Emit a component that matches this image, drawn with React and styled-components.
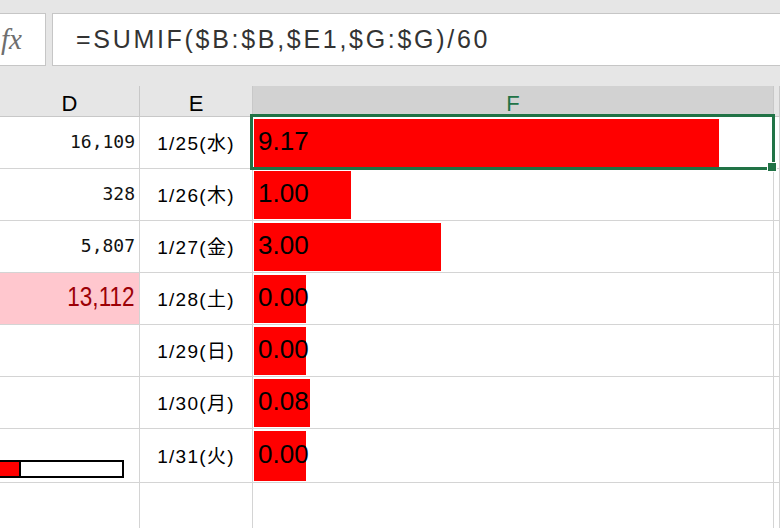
import React from "react";
import styled, { createGlobalStyle } from "styled-components";

const GlobalStyle = createGlobalStyle`
  body {
    margin: 0;
    background: #ffffff;
    overflow: hidden;
  }
`;

const Sheet = styled.div`
  width: 780px;
  height: 528px;
  overflow: hidden;
  display: flex;
  flex-direction: column;
  background: #ffffff;
`;

// 数式バー
const FormulaBar = styled.div`
  display: flex;
  gap: 6px;
  padding: 13px 0 20px;
  background: #e6e6e6;
`;

const FxBox = styled.div`
  box-sizing: border-box;
  margin-left: -20px;
  width: 66px;
  height: 53px;
  padding-right: 23px;
  display: flex;
  align-items: center;
  justify-content: flex-end;
  background: #ffffff;
  border: 1px solid #c6c6c6;
  font-family: "Liberation Serif", serif;
  font-style: italic;
  font-size: 29px;
  color: #6e6e6e;
`;

const FormulaInput = styled.div`
  box-sizing: border-box;
  flex: 1;
  margin-right: -20px;
  height: 53px;
  padding-left: 23px;
  display: flex;
  align-items: center;
  background: #ffffff;
  border: 1px solid #c6c6c6;
  font-family: "Liberation Sans", sans-serif;
  font-size: 25px;
  letter-spacing: 2.7px;
  color: #333333;
  white-space: nowrap;
`;

const Row = styled.div`
  display: grid;
  grid-template-columns: 140px 113px 521px 1fr;
  height: ${(p) => p.$h}px;
  flex-shrink: 0;
`;

const HeaderCell = styled.div`
  box-sizing: border-box;
  display: flex;
  align-items: flex-end;
  justify-content: center;
  padding-bottom: 1px;
  background: ${(p) => (p.$active ? "#d2d2d2" : "#e6e6e6")};
  border-right: 1px solid #c8c8c8;
  border-bottom: 1px solid #c8c8c8;
  font-family: "Liberation Sans", sans-serif;
  font-size: 22px;
  line-height: 22px;
  color: ${(p) => (p.$active ? "#217346" : "#000000")};
`;

const Cell = styled.div`
  box-sizing: border-box;
  position: relative;
  display: flex;
  align-items: center;
  border-right: 1px solid #d4d4d4;
  border-bottom: 1px solid #d4d4d4;
  background: #ffffff;
`;

const NumCell = styled(Cell)`
  padding-right: 4px;
  padding-bottom: ${(p) => (p.$bottom ? "0" : "2px")};
  font-family: "DejaVu Sans Mono", monospace;
  font-size: 18px;
  color: #111111;
  background: ${(p) => (p.$alert ? "#ffc7ce" : "#ffffff")};
  align-items: ${(p) => (p.$bottom ? "flex-end" : "center")};
  justify-content: ${(p) => (p.$bottom ? "flex-start" : "flex-end")};
`;

const AlertValue = styled.span`
  display: inline-block;
  font-family: "Liberation Sans", sans-serif;
  font-size: 27px;
  color: #9c0006;
  transform: scaleX(0.835);
  transform-origin: right center;
`;

const DateCell = styled(Cell)`
  justify-content: center;
  padding-bottom: 3px;
  font-family: "Liberation Sans", "Noto Sans CJK JP", sans-serif;
  font-size: 19px;
  letter-spacing: 1.3px;
  color: #000000;
`;

const BarCell = styled(Cell)`
  padding-left: 5px;
  font-family: "Liberation Sans", sans-serif;
  font-size: 26px;
  color: #000000;
`;

const DataBar = styled.div`
  position: absolute;
  left: 1px;
  top: 2px;
  bottom: 1px;
  background: #ff0000;
`;

const BarValue = styled.span`
  position: relative;
  padding-bottom: 3px;
`;

const Selection = styled.div`
  position: absolute;
  left: -3px;
  top: -3px;
  right: -2px;
  bottom: -2px;
  border: 3px solid #217346;
  pointer-events: none;
  z-index: 2;
`;

const FillHandle = styled.div`
  position: absolute;
  right: -5px;
  bottom: -5px;
  width: 8px;
  height: 8px;
  background: #217346;
  border: 1px solid #ffffff;
`;

const Progress = styled.div`
  box-sizing: border-box;
  margin: 0 0 4px -4px;
  width: 128px;
  height: 18px;
  border: 2px solid #000000;
  background: #ffffff;
  display: flex;
`;

const ProgressFill = styled.div`
  width: 21px;
  background: #ff0000;
  border-right: 2px solid #000000;
`;

const rows = [
  { d: "16,109", e: "1/25(水)", f: 9.17, selected: true },
  { d: "328", e: "1/26(木)", f: 1 },
  { d: "5,807", e: "1/27(金)", f: 3 },
  { d: "13,112", e: "1/28(土)", f: 0, alert: true },
  { e: "1/29(日)", f: 0 },
  { e: "1/30(月)", f: 0.08 },
  { e: "1/31(火)", f: 0, progress: true, h: 54 },
];

export default function App() {
  return (
    <Sheet>
      <GlobalStyle />
      <FormulaBar>
        <FxBox>fx</FxBox>
        <FormulaInput>=SUMIF($B:$B,$E1,$G:$G)/60</FormulaInput>
      </FormulaBar>

      <Row $h={31}>
        <HeaderCell>D</HeaderCell>
        <HeaderCell>E</HeaderCell>
        <HeaderCell $active>F</HeaderCell>
        <HeaderCell />
      </Row>

      {rows.map((r, i) => (
        <Row key={i} $h={r.h || 52}>
          <NumCell $alert={r.alert} $bottom={r.progress}>
            {r.alert ? <AlertValue>{r.d}</AlertValue> : r.d}
            {r.progress && (
              <Progress>
                <ProgressFill />
              </Progress>
            )}
          </NumCell>
          <DateCell>{r.e}</DateCell>
          <BarCell>
            <DataBar style={{ width: Math.round(52 + 45 * r.f) }} />
            <BarValue>{r.f.toFixed(2)}</BarValue>
            {r.selected && (
              <Selection>
                <FillHandle />
              </Selection>
            )}
          </BarCell>
          <Cell />
        </Row>
      ))}

      <Row $h={60}>
        <Cell />
        <Cell />
        <Cell />
        <Cell />
      </Row>
    </Sheet>
  );
}
